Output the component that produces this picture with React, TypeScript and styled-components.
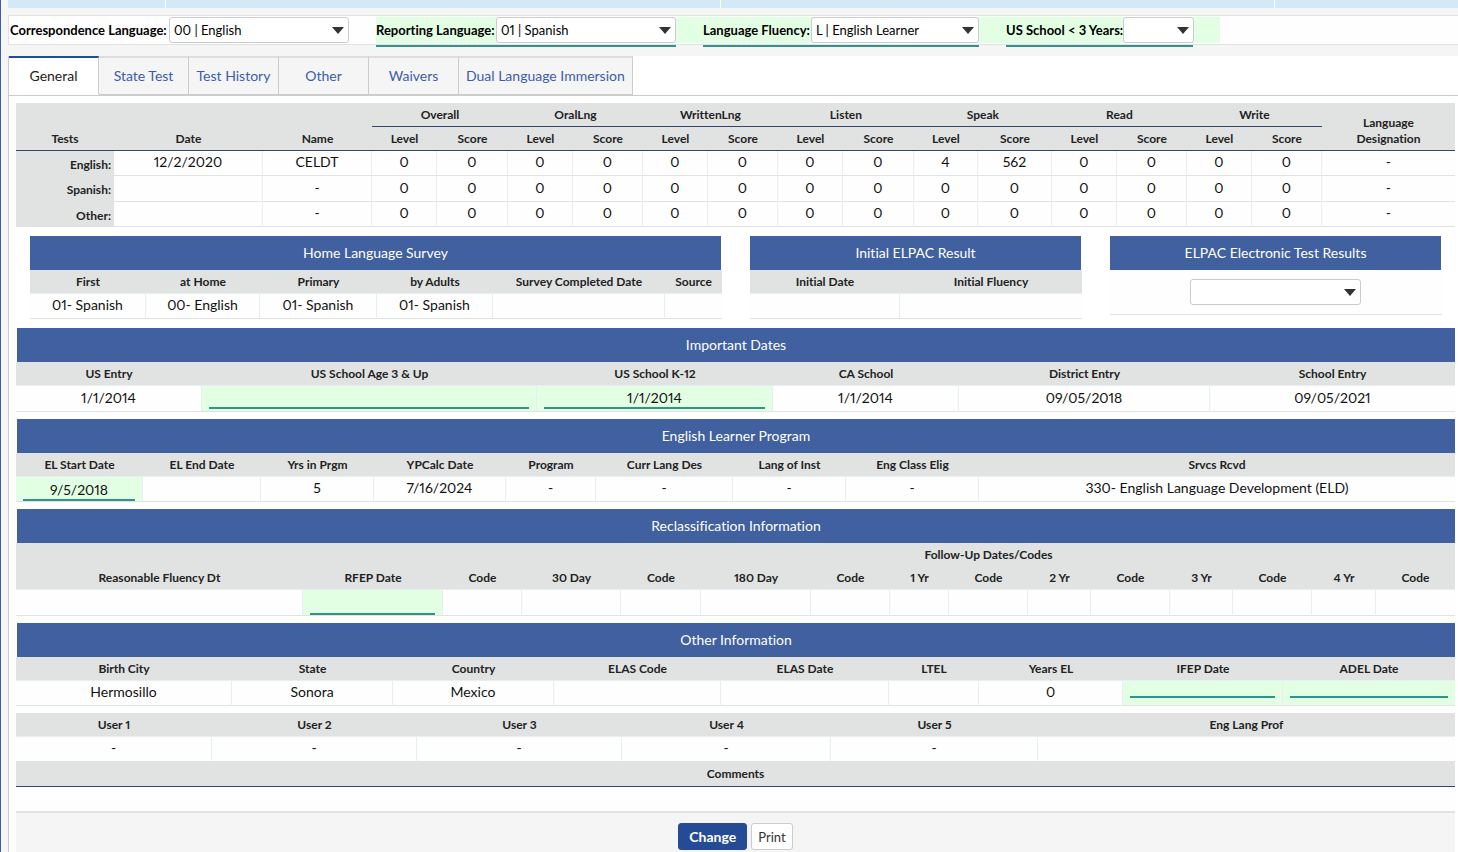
import React, { useState } from 'react';
import styled, { createGlobalStyle, css } from 'styled-components';

const color = {
  navy: '#264b96',
  title: '#4060a0',
  head: '#e1e3e2',
  rule: '#e1e3e2',
  cellRule: '#e8eff2',
  darkRule: '#34466f',
  grey: '#cccccc',
  page: '#f5f5f5',
  cell: '#fefefe',
  green: '#e3ffe3',
  teal: '#2f948c',
};

const GlobalStyle = createGlobalStyle`
  *, *::before, *::after { box-sizing: border-box; }
  html, body { margin: 0; }
  body {
    background: ${color.page};
    color: #111;
    font-family: Lato, "Liberation Sans", sans-serif;
    font-size: 14px;
    font-variant-ligatures: none;
    font-variant-numeric: proportional-nums;
    line-height: 18px;
  }
`;

const Page = styled.div`
  display: flex;
  flex-direction: column;
  min-height: 100vh;
  padding-left: 7px;
  border-left: 1px solid #3a5dae;
`;

const TopStrip = styled.div`
  display: grid;
  grid-template-columns: 157fr 554fr 553fr 183fr;
  column-gap: 1px;
  height: 8px;
  background: #fff;
`;

const StripCell = styled.div`
  background: #d4e9f7;
`;

const FilterBar = styled.form`
  display: flex;
  align-items: flex-start;
  height: 30px;
  margin: 7px 0 11px;
  padding: 1px 0 0 1px;
  background: ${color.cell};
  border: 1px solid ${color.rule};
  border-right: 0;
`;

const FilterGroup = styled.div<{ $editable?: boolean }>`
  display: flex;
  gap: 27px;
  height: 26px;
  padding-right: 27px;
  background: ${(p) => (p.$editable ? color.green : 'transparent')};
`;

const Filter = styled.div<{ $editable?: boolean; $width: number }>`
  display: flex;
  align-items: center;
  justify-content: space-between;
  width: ${(p) => p.$width}px;
  height: ${(p) => (p.$editable ? 30 : 26)}px;
  padding-bottom: ${(p) => (p.$editable ? 2 : 0)}px;
  border-bottom: ${(p) => (p.$editable ? `2px solid ${color.teal}` : '0')};
`;

const FilterLabel = styled.label`
  font-size: 13px;
  font-weight: 700;
  white-space: nowrap;
  color: #000;
`;

const SelectBox = styled.span<{ $width: number }>`
  position: relative;
  display: block;
  flex: none;
  width: ${(p) => p.$width}px;
  height: 26px;

  &::after {
    content: '';
    position: absolute;
    top: 10px;
    right: 5px;
    border: 6px solid transparent;
    border-top: 7px solid #333;
    border-bottom: 0;
    pointer-events: none;
  }
`;

const SelectInput = styled.select`
  appearance: none;
  width: 100%;
  height: 26px;
  padding: 0 20px 0 4px;
  border: 1px solid ${color.grey};
  border-radius: 3px;
  background: #fff;
  color: #000;
  font: inherit;
  font-size: 13px;
`;

const Panel = styled.main`
  display: flex;
  flex-direction: column;
  flex: 1;
  background: #fff;
  border-left: 1px solid ${color.grey};
`;

const TabList = styled.div`
  display: flex;
  height: 40px;
  border-bottom: 1px solid ${color.grey};
`;

const Tab = styled.button<{ $active: boolean }>`
  min-width: 90px;
  padding: 0 7px;
  border: 0;
  border-right: 1px solid ${color.grey};
  font: inherit;
  background: ${color.page};
  color: #3a5dae;
  border-top: 2px solid #dddddd;
  border-bottom: 1px solid ${color.grey};
  cursor: pointer;
  ${(p) =>
    p.$active &&
    css`
      background: #fff;
      color: #222;
      border-top-color: ${color.navy};
      border-bottom-color: #fff;
    `}
`;

const Content = styled.div`
  display: flex;
  flex-direction: column;
  gap: 7px;
  flex: 1;
  padding: 7px 3px 0 7px;
`;

const SectionTitle = styled.h2`
  margin: 0 0 0 1px;
  height: 34px;
  line-height: 34px;
  background: ${color.title};
  color: #fff;
  font-size: 14px;
  font-weight: 400;
  text-align: center;
`;

const PanelRow = styled.div`
  display: grid;
  grid-template-columns: 692fr 332fr 332fr;
  align-items: start;
  gap: 28px;
  margin: 2px 0;
  padding: 0 13px 0 14px;

  ${SectionTitle} {
    margin: 0 1px 0 0;
  }
`;

const Table = styled.table`
  width: 100%;
  table-layout: fixed;
  border-collapse: separate;
  border-spacing: 0;
`;

const Col = styled.col<{ $share: number }>`
  width: ${(p) => p.$share}%;
`;

const Head = styled.th<{ $line?: 'dark' | 'light' }>`
  height: ${(p) => (p.$line ? 24 : 23)}px;
  padding: 0 2px 3px;
  background: ${color.head};
  border-bottom: ${(p) =>
    p.$line ? `1px solid ${p.$line === 'dark' ? color.darkRule : color.cellRule}` : '0'};
  font-size: 12px;
  font-weight: 700;
  line-height: 16px;
  vertical-align: bottom;
  white-space: nowrap;
  color: #222;
`;

const RowHead = styled.th`
  padding: 2px 3px 0 0;
  background: ${color.head};
  font-size: 12px;
  font-weight: 700;
  line-height: 16px;
  text-align: right;
  color: #222;
`;

const Cell = styled.td<{ $editable?: boolean; $height: number }>`
  height: ${(p) => p.$height}px;
  padding: ${(p) => (p.$editable ? '0 7px' : '0 7px 2px')};
  background: ${(p) => (p.$editable ? color.green : color.cell)};
  border-right: 1px solid ${color.cellRule};
  border-bottom: 1px solid ${color.rule};
  text-align: center;
  white-space: nowrap;
  vertical-align: ${(p) => (p.$editable ? 'bottom' : 'middle')};

  &:last-child {
    border-right: 0;
  }
`;

const Underlined = styled.div<{ $lift: number }>`
  height: 22px;
  margin-bottom: ${(p) => p.$lift}px;
  border-bottom: 2px solid ${color.teal};
  line-height: 22px;

  &:empty {
    height: 16px;
  }
`;

const SelectPanelBody = styled.div`
  display: flex;
  justify-content: center;
  padding: 9px 1px 9px 0;
  background: ${color.cell};
  border-bottom: 1px solid ${color.rule};
`;

const CommentsTitle = styled.h3`
  height: 25px;
  margin: 0;
  background: ${color.head};
  border-bottom: 1px solid ${color.darkRule};
  font-size: 12px;
  font-weight: 700;
  line-height: 24px;
  text-align: center;
  color: #222;
`;

const CommentsBody = styled.div`
  height: 24px;
  background: ${color.cell};
`;

const Footer = styled.footer`
  display: flex;
  flex: 1;
  align-items: flex-start;
  justify-content: center;
  gap: 4px;
  margin-top: -7px;
  padding: 10px 0 2px;
  background: ${color.page};
  border-top: 2px solid ${color.rule};
`;

const ActionButton = styled.button<{ $primary?: boolean }>`
  height: 27px;
  padding: 0 ${(p) => (p.$primary ? 10 : 6)}px;
  border: 1px solid ${(p) => (p.$primary ? color.navy : color.grey)};
  border-radius: 3px;
  background: ${(p) => (p.$primary ? color.navy : '#fff')};
  color: ${(p) => (p.$primary ? '#fff' : '#333')};
  font: inherit;
  font-size: ${(p) => (p.$primary ? 14 : 13)}px;
  font-weight: ${(p) => (p.$primary ? 700 : 400)};
  cursor: pointer;
`;

const Columns = ({ widths }: { widths: number[] }) => {
  const total = widths.reduce((a, b) => a + b, 0);
  return (
    <colgroup>
      {widths.map((w, i) => (
        <Col key={i} $share={(w / total) * 100} />
      ))}
    </colgroup>
  );
};

type Field = { label: string; width: number; value?: string; editable?: boolean };

type DataTableProps = {
  fields: Field[];
  rowHeight?: number;
  lift?: number;
  group?: { before: number; label: string };
};

const DataTable = ({ fields, rowHeight = 25, lift = 0, group }: DataTableProps) => (
  <Table>
    <Columns widths={fields.map((f) => f.width)} />
    <thead>
      {group && (
        <tr>
          <Head as="td" colSpan={group.before} />
          <Head colSpan={fields.length - group.before}>{group.label}</Head>
        </tr>
      )}
      <tr>
        {fields.map((f, i) => (
          <Head key={i} scope="col" $line="light">
            {f.label}
          </Head>
        ))}
      </tr>
    </thead>
    <tbody>
      <tr>
        {fields.map((f, i) => (
          <Cell key={i} $editable={f.editable} $height={rowHeight}>
            {f.editable ? <Underlined $lift={lift}>{f.value}</Underlined> : f.value}
          </Cell>
        ))}
      </tr>
    </tbody>
  </Table>
);

type SelectProps = { id: string; value: string; width: number; label?: string };

const Select = ({ id, value, width, label }: SelectProps) => (
  <SelectBox $width={width}>
    <SelectInput id={id} aria-label={label} defaultValue={value}>
      <option value={value}>{value}</option>
    </SelectInput>
  </SelectBox>
);

const tabs = ['General', 'State Test', 'Test History', 'Other', 'Waivers', 'Dual Language Immersion'];

const testColumns = [98, 149, 109, 65, 71, 65, 70, 65, 70, 65, 71, 64, 74, 65, 70, 65, 70, 133];
const skills = ['Overall', 'OralLng', 'WrittenLng', 'Listen', 'Speak', 'Read', 'Write'];
const zeros = (n: number) => Array<string>(n).fill('0');
const testRows = [
  { label: 'English:', cells: ['12/2/2020', 'CELDT', ...zeros(8), '4', '562', ...zeros(4), '-'] },
  { label: 'Spanish:', cells: ['', '-', ...zeros(14), '-'] },
  { label: 'Other:', cells: ['', '-', ...zeros(14), '-'] },
];

const survey: Field[] = [
  { label: 'First', width: 116, value: '01- Spanish' },
  { label: 'at Home', width: 114, value: '00- English' },
  { label: 'Primary', width: 117, value: '01- Spanish' },
  { label: 'by Adults', width: 116, value: '01- Spanish' },
  { label: 'Survey Completed Date', width: 172 },
  { label: 'Source', width: 57 },
];

const initial: Field[] = [
  { label: 'Initial Date', width: 150 },
  { label: 'Initial Fluency', width: 182 },
];

const dates: Field[] = [
  { label: 'US Entry', width: 186, value: '1/1/2014' },
  { label: 'US School Age 3 & Up', width: 335, editable: true },
  { label: 'US School K-12', width: 236, value: '1/1/2014', editable: true },
  { label: 'CA School', width: 186, value: '1/1/2014' },
  { label: 'District Entry', width: 251, value: '09/05/2018' },
  { label: 'School Entry', width: 245, value: '09/05/2021' },
];

const program: Field[] = [
  { label: 'EL Start Date', width: 127, value: '9/5/2018', editable: true },
  { label: 'EL End Date', width: 118 },
  { label: 'Yrs in Prgm', width: 113, value: '5' },
  { label: 'YPCalc Date', width: 132, value: '7/16/2024' },
  { label: 'Program', width: 90, value: '-' },
  { label: 'Curr Lang Des', width: 137, value: '-' },
  { label: 'Lang of Inst', width: 113, value: '-' },
  { label: 'Eng Class Elig', width: 133, value: '-' },
  { label: 'Srvcs Rcvd', width: 476, value: '330- English Language Development (ELD)' },
];

const reclassification: Field[] = [
  { label: 'Reasonable Fluency Dt', width: 287 },
  { label: 'RFEP Date', width: 140, editable: true },
  { label: 'Code', width: 79 },
  { label: '30 Day', width: 99 },
  { label: 'Code', width: 80 },
  { label: '180 Day', width: 110 },
  { label: 'Code', width: 79 },
  { label: '1 Yr', width: 59 },
  { label: 'Code', width: 79 },
  { label: '2 Yr', width: 63 },
  { label: 'Code', width: 79 },
  { label: '3 Yr', width: 63 },
  { label: 'Code', width: 79 },
  { label: '4 Yr', width: 64 },
  { label: 'Code', width: 79 },
];

const other: Field[] = [
  { label: 'Birth City', width: 216, value: 'Hermosillo' },
  { label: 'State', width: 161, value: 'Sonora' },
  { label: 'Country', width: 161, value: 'Mexico' },
  { label: 'ELAS Code', width: 167 },
  { label: 'ELAS Date', width: 168 },
  { label: 'LTEL', width: 90 },
  { label: 'Years EL', width: 144, value: '0' },
  { label: 'IFEP Date', width: 160, editable: true },
  { label: 'ADEL Date', width: 172, editable: true },
];

const users: Field[] = [
  { label: 'User 1', width: 196, value: '-' },
  { label: 'User 2', width: 205, value: '-' },
  { label: 'User 3', width: 205, value: '-' },
  { label: 'User 4', width: 209, value: '-' },
  { label: 'User 5', width: 207, value: '-' },
  { label: 'Eng Lang Prof', width: 417 },
];

const TestsTable = () => (
  <Table>
    <Columns widths={testColumns} />
    <thead>
      <tr>
        {['Tests', 'Date', 'Name'].map((t) => (
          <Head key={t} scope="col" rowSpan={2} $line="dark">
            {t}
          </Head>
        ))}
        {skills.map((s) => (
          <Head key={s} scope="colgroup" colSpan={2} $line="dark">
            {s}
          </Head>
        ))}
        <Head scope="col" rowSpan={2} $line="dark">
          Language
          <br />
          Designation
        </Head>
      </tr>
      <tr>
        {skills.map((s) => (
          <React.Fragment key={s}>
            <Head scope="col" $line="dark">
              Level
            </Head>
            <Head scope="col" $line="dark">
              Score
            </Head>
          </React.Fragment>
        ))}
      </tr>
    </thead>
    <tbody>
      {testRows.map((row, r) => (
        <tr key={row.label}>
          <RowHead scope="row">{row.label}</RowHead>
          {row.cells.map((c, i) => (
            <Cell key={i} $height={r === 1 ? 26 : 25}>
              {c}
            </Cell>
          ))}
        </tr>
      ))}
    </tbody>
  </Table>
);

export default function App() {
  const [active, setActive] = useState('General');

  return (
    <>
      <GlobalStyle />
      <Page>
        <TopStrip>
          <StripCell />
          <StripCell />
          <StripCell />
          <StripCell />
        </TopStrip>

        <FilterBar>
          <FilterGroup>
            <Filter $width={339}>
              <FilterLabel htmlFor="correspondence">Correspondence Language:</FilterLabel>
              <Select id="correspondence" value="00 | English" width={180} />
            </Filter>
          </FilterGroup>
          <FilterGroup $editable>
            <Filter $editable $width={300}>
              <FilterLabel htmlFor="reporting">Reporting Language:</FilterLabel>
              <Select id="reporting" value="01 | Spanish" width={180} />
            </Filter>
            <Filter $editable $width={276}>
              <FilterLabel htmlFor="fluency">Language Fluency:</FilterLabel>
              <Select id="fluency" value="L | English Learner" width={168} />
            </Filter>
            <Filter $editable $width={187}>
              <FilterLabel htmlFor="us-school">US School &lt; 3 Years:</FilterLabel>
              <Select id="us-school" value="" width={71} />
            </Filter>
          </FilterGroup>
        </FilterBar>

        <Panel>
          <TabList role="tablist">
            {tabs.map((t) => (
              <Tab
                key={t}
                type="button"
                role="tab"
                aria-selected={t === active}
                $active={t === active}
                onClick={() => setActive(t)}
              >
                {t}
              </Tab>
            ))}
          </TabList>

          <Content>
            <TestsTable />

            <PanelRow>
              <section>
                <SectionTitle>Home Language Survey</SectionTitle>
                <DataTable fields={survey} />
              </section>
              <section>
                <SectionTitle>Initial ELPAC Result</SectionTitle>
                <DataTable fields={initial} />
              </section>
              <section>
                <SectionTitle>ELPAC Electronic Test Results</SectionTitle>
                <SelectPanelBody>
                  <Select id="elpac-results" label="ELPAC Electronic Test Results" value="" width={171} />
                </SelectPanelBody>
              </section>
            </PanelRow>

            <section>
              <SectionTitle>Important Dates</SectionTitle>
              <DataTable fields={dates} rowHeight={26} lift={2} />
            </section>

            <section>
              <SectionTitle>English Learner Program</SectionTitle>
              <DataTable fields={program} />
            </section>

            <section>
              <SectionTitle>Reclassification Information</SectionTitle>
              <DataTable
                fields={reclassification}
                rowHeight={26}
                group={{ before: 3, label: 'Follow-Up Dates/Codes' }}
              />
            </section>

            <section>
              <SectionTitle>Other Information</SectionTitle>
              <DataTable fields={other} lift={7} />
            </section>

            <section>
              <DataTable fields={users} />
              <CommentsTitle>Comments</CommentsTitle>
              <CommentsBody />
            </section>

            <Footer>
              <ActionButton type="button" $primary>
                Change
              </ActionButton>
              <ActionButton type="button">Print</ActionButton>
            </Footer>
          </Content>
        </Panel>
      </Page>
    </>
  );
}
